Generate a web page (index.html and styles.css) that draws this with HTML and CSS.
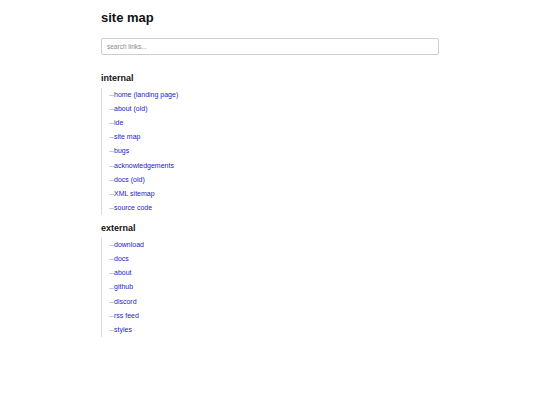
FILE: index.html
```html
<!DOCTYPE html>
<html>
<head>
<meta charset="utf-8">
<title>site map</title>
<link rel="stylesheet" href="styles.css">
</head>
<body>
<main class="page">
  <h1 class="title">site map</h1>
  <input class="search" type="text" placeholder="search links...">
  <section class="group">
    <h2 class="group-title">internal</h2>
    <ul class="links">
      <li><a href="#">home (landing page)</a></li>
      <li><a href="#">about (old)</a></li>
      <li><a href="#">ide</a></li>
      <li><a href="#">site map</a></li>
      <li><a href="#">bugs</a></li>
      <li><a href="#">acknowledgements</a></li>
      <li><a href="#">docs (old)</a></li>
      <li><a href="#">XML sitemap</a></li>
      <li><a href="#">source code</a></li>
    </ul>
  </section>
  <section class="group">
    <h2 class="group-title">external</h2>
    <ul class="links">
      <li><a href="#">download</a></li>
      <li><a href="#">docs</a></li>
      <li><a href="#">about</a></li>
      <li><a href="#">github</a></li>
      <li><a href="#">discord</a></li>
      <li><a href="#">rss feed</a></li>
      <li><a href="#">styles</a></li>
    </ul>
  </section>
</main>
</body>
</html>
```

FILE: styles.css
```css
html, body {
  margin: 0;
  padding: 0;
  background: #ffffff;
}
body {
  font-family: "Liberation Sans", Arial, sans-serif;
  color: #111;
}
.page {
  width: 338px;
  margin: 0 auto;
  padding-top: 10px;
}
.title {
  font-size: 13px;
  line-height: 16px;
  font-weight: bold;
  margin: 0 0 12px 0;
  color: #111;
}
.search {
  display: block;
  box-sizing: border-box;
  width: 338px;
  height: 17px;
  margin: 0;
  padding: 0 5px;
  border: 1px solid #cfcfcf;
  border-radius: 2px;
  font-family: "Liberation Sans", Arial, sans-serif;
  font-size: 6.5px;
  color: #333;
  outline: none;
}
.search::placeholder {
  color: #888;
}
.group {
  margin-top: 17.5px;
}
.group + .group {
  margin-top: 7.5px;
}
.group-title {
  font-size: 9px;
  line-height: 11px;
  font-weight: bold;
  margin: 0 0 4px 0;
  color: #111;
}
.links {
  list-style: none;
  margin: 0;
  padding: 0 0 0 7px;
  border-left: 1px solid #dddddd;
}
.links li {
  font-size: 7px;
  line-height: 14.2px;
  display: flex;
  align-items: center;
}
.links li::before {
  content: "";
  flex: none;
  width: 5px;
  height: 1px;
  background: #cccccc;
  margin-top: 1px;
}
.links a {
  color: #2323c4;
  text-decoration: none;
}
```
